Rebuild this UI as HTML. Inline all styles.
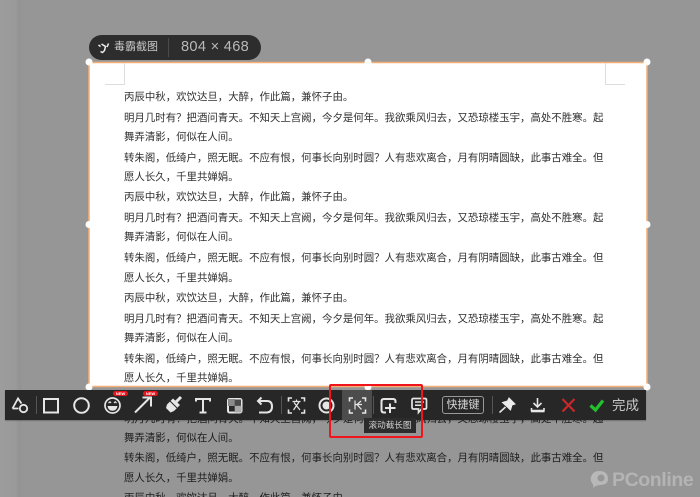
<!DOCTYPE html>
<html lang="zh"><head><meta charset="utf-8"><title>毒霸截图</title>
<style>
html,body{margin:0;padding:0;width:700px;height:497px;overflow:hidden}
body{background:#969696;font-family:"Liberation Sans","Noto Sans CJK SC",sans-serif}
#page{position:relative;width:700px;height:497px;overflow:hidden;background:#969696}
.abs{position:absolute}
.strip{left:0;top:0;width:21px;height:497px;background:linear-gradient(90deg,#9c9c9c,#9a9a9a 70%,#929292)}
.t{position:absolute;left:124px;font-family:"Liberation Sans","Noto Sans CJK TC",sans-serif;font-size:10.43px;line-height:14px;height:14px;white-space:nowrap;color:#1e1e1e}
.in{color:#303030}
.bar{position:absolute;left:5px;top:390px;width:641px;height:30px;background:#272727;box-shadow:0 1px 1px rgba(0,0,0,.25)}
svg{display:block;overflow:visible}
.new{position:absolute;top:391px;width:15px;height:5px;background:#e8141c;border-radius:3px;color:#fff;font-size:4px;line-height:5px;text-align:center;font-weight:bold}
.sep{position:absolute;top:396px;width:1px;height:18px;background:#555}
</style></head><body><div id="page">
<div class="abs strip"></div>

<div class="t" style="top:398px">转朱阁，低绮户，照无眠。不应有恨，何事长向别时圆？人有悲欢离合，月有阴晴圆缺，此事古难全。但</div>
<div class="t" style="top:413px">明月几时有？把酒问青天。不知天上宫阙，今夕是何年。我欲乘风归去，又恐琼楼玉宇，高处不胜寒。起</div>
<div class="t" style="top:432px">舞弄清影，何似在人间。</div>
<div class="t" style="top:452px">转朱阁，低绮户，照无眠。不应有恨，何事长向别时圆？人有悲欢离合，月有阴晴圆缺，此事古难全。但</div>
<div class="t" style="top:472px">愿人长久，千里共婵娟。</div>
<div class="t" style="top:492px">丙辰中秋，欢饮达旦，大醉，作此篇，兼怀子由。</div>

<svg class="abs" style="left:0;top:0" width="700" height="497" viewBox="0 0 700 497"><rect x="89" y="62.500" width="558" height="324" fill="#fff" stroke="#f5ae74" stroke-width="1.500"/></svg>
<div class="abs" style="left:124px;top:63px;width:1px;height:21px;background:#ddd"></div>
<div class="abs" style="left:105px;top:84px;width:20px;height:1px;background:#ddd"></div>
<div class="abs" style="left:605px;top:63px;width:1px;height:21px;background:#ddd"></div>
<div class="abs" style="left:605px;top:84px;width:20px;height:1px;background:#ddd"></div>

<div class="t in" style="top:91px">丙辰中秋，欢饮达旦，大醉，作此篇，兼怀子由。</div>
<div class="t in" style="top:112px">明月几时有？把酒问青天。不知天上宫阙，今夕是何年。我欲乘风归去，又恐琼楼玉宇，高处不胜寒。起</div>
<div class="t in" style="top:131px">舞弄清影，何似在人间。</div>
<div class="t in" style="top:152px">转朱阁，低绮户，照无眠。不应有恨，何事长向别时圆？人有悲欢离合，月有阴晴圆缺，此事古难全。但</div>
<div class="t in" style="top:171px">愿人长久，千里共婵娟。</div>
<div class="t in" style="top:191px">丙辰中秋，欢饮达旦，大醉，作此篇，兼怀子由。</div>
<div class="t in" style="top:212px">明月几时有？把酒问青天。不知天上宫阙，今夕是何年。我欲乘风归去，又恐琼楼玉宇，高处不胜寒。起</div>
<div class="t in" style="top:231px">舞弄清影，何似在人间。</div>
<div class="t in" style="top:252px">转朱阁，低绮户，照无眠。不应有恨，何事长向别时圆？人有悲欢离合，月有阴晴圆缺，此事古难全。但</div>
<div class="t in" style="top:272px">愿人长久，千里共婵娟。</div>
<div class="t in" style="top:292px">丙辰中秋，欢饮达旦，大醉，作此篇，兼怀子由。</div>
<div class="t in" style="top:313px">明月几时有？把酒问青天。不知天上宫阙，今夕是何年。我欲乘风归去，又恐琼楼玉宇，高处不胜寒。起</div>
<div class="t in" style="top:332px">舞弄清影，何似在人间。</div>
<div class="t in" style="top:353px">转朱阁，低绮户，照无眠。不应有恨，何事长向别时圆？人有悲欢离合，月有阴晴圆缺，此事古难全。但</div>
<div class="t in" style="top:372px">愿人长久，千里共婵娟。</div>

<svg class="abs" style="left:0;top:0" width="700" height="497" viewBox="0 0 700 497" fill="#fff">
<circle cx="89" cy="62" r="3.500"/><circle cx="368" cy="62" r="3.500"/><circle cx="647" cy="62" r="3.500"/>
<circle cx="89" cy="224.500" r="3.500"/><circle cx="647" cy="224.500" r="3.500"/>
<circle cx="89" cy="387" r="3.500"/><circle cx="368" cy="387" r="3.500"/><circle cx="647" cy="387" r="3.500"/>
</svg>

<!-- info pill -->
<div class="abs" style="left:89px;top:35px;width:172px;height:25px;border-radius:12.5px;background:#2d2d2d"></div>
<svg class="abs" style="left:98px;top:42px" width="12" height="12" viewBox="0 0 12 12"><path d="M.5 3 2.500 4.500M3.500 2 7.500 4.500 6.500 8.500 4.500 10.500 2.500 9.500M10.500 1.500 9 5" fill="none" stroke="#eee" stroke-width="1.500"/></svg>
<div class="abs" style="left:114px;top:40px;font-size:11px;line-height:15px;color:#c9c9c9;white-space:nowrap">毒霸截图</div>
<div class="abs" style="left:168px;top:38px;width:1px;height:19px;background:#4b4b4b"></div>
<div class="abs" style="left:181px;top:38px;font-size:14.6px;line-height:19px;color:#b9b9b9;white-space:nowrap;letter-spacing:.3px">804 × 468</div>

<!-- toolbar -->
<div class="bar"></div>
<div class="abs" style="left:342px;top:390px;width:30px;height:30px;background:#4c4c4c"></div>
<div class="sep" style="left:36px"></div>
<div class="sep" style="left:281px"></div>
<div class="sep" style="left:373px"></div>
<div class="sep" style="left:492px"></div>

<svg class="abs" style="left:0;top:380px" width="700" height="50" viewBox="0 380 700 50" fill="none" stroke="#e6e6e6" stroke-width="2">
<!-- shapes -->
<path d="M12.500 408.500 18 398.500 21.500 403.500M12.500 408.500H18.500" stroke-width="1.800"/><circle cx="23.500" cy="408.500" r="3.700" stroke-width="1.800"/>
<!-- rect -->
<rect x="44" y="399" width="14" height="13.500"/>
<!-- circle -->
<circle cx="81.500" cy="405.500" r="7.300"/>
<!-- smile -->
<circle cx="112.500" cy="405.500" r="7.500" stroke-width="1.700"/><path d="M108.500 403 110 401.800 111 403M114 403 115.200 401.800 116.500 403" stroke-width="1.200"/><path d="M107.500 406H117.500Q116.800 410.800 112.500 410.800 108.200 410.800 107.500 406Z" fill="#e6e6e6" stroke="none"/>
<!-- arrow -->
<path d="M135 412.500 150 397.500M142.500 397.500H151V406.500"/>
<!-- brush -->
<path d="M167 404.500 173 398.500 180 405 174 411 170.500 412.500 166 408Z" fill="#e6e6e6" stroke="none"/><path d="M170 401 177 408" stroke="#272727" stroke-width="1"/><path d="M176 402 181 397" stroke-width="3"/>
<!-- T -->
<path d="M196 401.500V399H210V401.500M203 399V412.500M199.500 412.500H206.500"/>
<!-- mosaic -->
<rect x="228" y="399" width="13.500" height="13.500" rx="1.500"/><rect x="228" y="399" width="7" height="7" fill="#8a8a8a" stroke="none"/><rect x="234.700" y="405.700" width="6.800" height="6.800" fill="#aaa" stroke="none"/><rect x="234.700" y="399.500" width="6.300" height="6.200" fill="#4a4a4a" stroke="none"/>
<!-- undo -->
<path d="M261.500 397.500 258 401 261.500 404.500M258.500 401H267Q272 401 272 406.500T267 412.500H259"/>
<!-- ocr -->
<path d="M288.500 401.500V398H292M301 398H304.500V401.500M288.500 409.500V413H292M301 413H304.500V409.500" stroke-width="1.600"/>
<path d="M292.500 401.500H300.500M296.500 399.500V401.500M299 402 293.500 410M294 402.500 300 410" stroke-width="1.200"/>
<!-- record -->
<circle cx="326.500" cy="405.500" r="7"/><circle cx="326.500" cy="405.500" r="4" fill="#e6e6e6" stroke="none"/>
<!-- long screenshot -->
<path d="M349.500 401.500V398H353M362 398H365.500V401.500M349.500 409.500V413H353M362 413H365.500V409.500" stroke-width="1.600"/>
<path d="M355 400.500V409.500M361 401 357 404.500 361.500 409.500M355 404.500H362" stroke-width="1.200"/>
<!-- add screenshot -->
<path d="M395.500 403V401.500Q395.500 399 393 399H384Q381.500 399 381.500 401.500V410Q381.500 412.500 384 412.500H386"/><path d="M390 403.500V413M385 408H395.500"/>
<!-- comment -->
<path d="M413.500 398.500H425Q426.500 398.500 426.500 400V407.500Q426.500 409 425 409H421.500L418.500 412.500V409H413.500Q412 409 412 407.500V400Q412 398.500 413.500 398.500Z" stroke-width="1.700"/><path d="M415 402H424M415 405.300H421" stroke-width="1.500"/>
<!-- pin -->
<path d="M509 398 515 404 512 405 510.500 410 502.500 402.500 507.500 401Z" fill="#ececec" stroke="#ececec" stroke-width="1"/><path d="M505.500 407 499.500 412.500" stroke-width="1.600"/>
<!-- download -->
<path d="M537.500 398V407M533.500 403 537.500 407 541.500 403M531.500 408V410.500H544V408" stroke-width="1.600"/><path d="M531 411.500H544.500" stroke-width="1.600"/>
<!-- X -->
<path d="M562.500 399 574.500 411.500M574.500 399 562.500 411.500" stroke="#c8282a" stroke-width="2.200"/>
<!-- check -->
<path d="M590.500 405.500 595.500 410 603 400.500" stroke="#22c02c" stroke-width="3.200"/>
</svg>

<div class="new" style="left:113px">NEW</div>
<div class="new" style="left:143px">NEW</div>

<div class="abs" style="left:442px;top:396px;width:40px;height:16px;border:1px solid #999;border-radius:3px;color:#d8d8d8;font-size:11px;line-height:16px;text-align:center;white-space:nowrap">快捷键</div>
<div class="abs" style="left:612px;top:397px;font-size:13.5px;line-height:17px;color:#c8c8c8;white-space:nowrap">完成</div>

<!-- tooltip -->
<div class="abs" style="left:364px;top:418px;width:52px;height:15px;background:#2c2c2c;color:#d4d4d4;font-size:8.6px;line-height:15px;text-align:center;white-space:nowrap">滚动截长图</div>

<!-- red highlight -->
<div class="abs" style="left:329px;top:384px;width:94px;height:54px;box-sizing:border-box;border:2px solid #f0141c;border-radius:2px"></div>

<!-- watermark -->
<svg class="abs" style="left:589px;top:470px" width="22" height="20" viewBox="0 0 22 20"><path d="M10 1Q19 1 19 9 19 15 11 15 7 15 4 18 5 15 3 13 1 10 2 7 4 1 10 1Z" fill="#b8b8b8"/><circle cx="12" cy="8" r="3.500" fill="#969696"/></svg>
<div class="abs" style="left:612px;top:469px;font-size:19.5px;line-height:22px;color:#b4b4b4;font-weight:bold;letter-spacing:-.4px;white-space:nowrap">PConline</div>
</div></body></html>
